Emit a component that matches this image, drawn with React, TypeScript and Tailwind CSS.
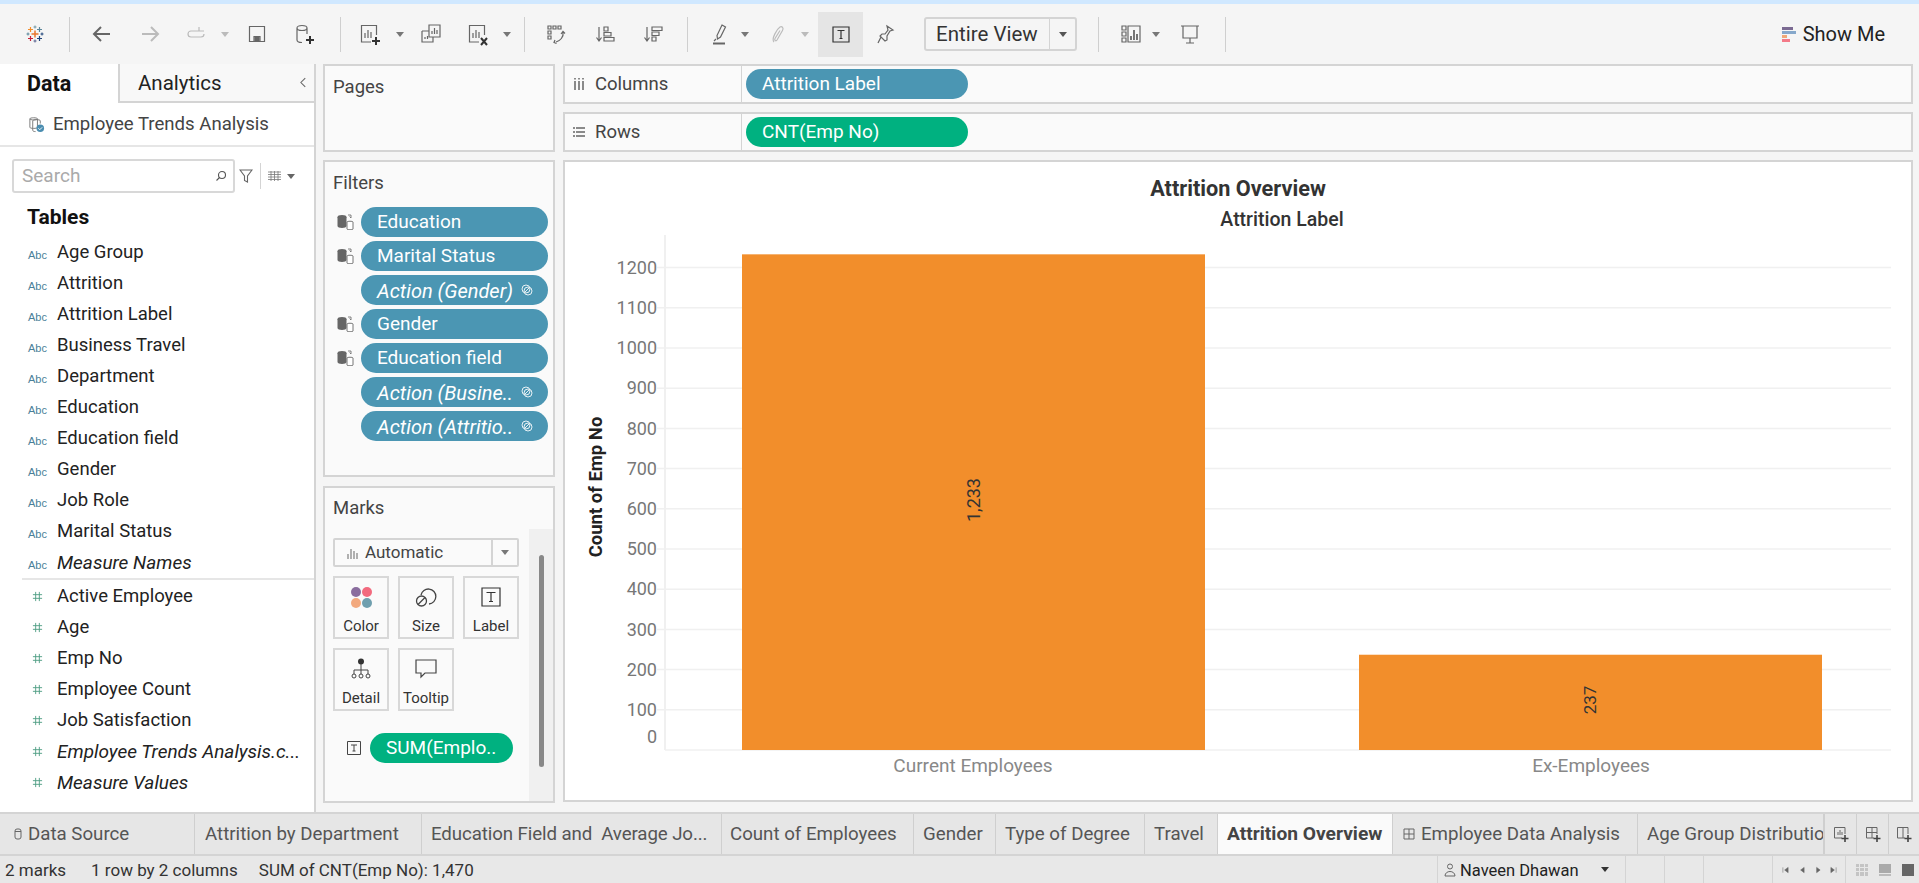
import type { ReactNode } from 'react'

const font = '[font-family:Roboto,"Liberation_Sans",sans-serif]'

function Ico({ children, className = '' }: { children: ReactNode; className?: string }) {
  return (
    <svg viewBox="0 0 24 24" fill="none" stroke="#666" strokeWidth="1.2" className={`w-[24px] h-[24px] shrink-0 ${className}`}>
      {children}
    </svg>
  )
}

function Caret({ className = '', color = '#777' }: { className?: string; color?: string }) {
  return (
    <svg viewBox="0 0 8 5" className={`w-[8px] h-[5px] shrink-0 ${className}`}>
      <path d="M0 0h8L4 5z" fill={color} />
    </svg>
  )
}

function Sep({ className = '' }: { className?: string }) {
  return <div className={`w-[1px] h-[35px] bg-[#cfcfcf] shrink-0 ${className}`} />
}

function Logo() {
  const plus = (x: number, y: number, r: number, c: string, w = 1.2) => (
    <path d={`M${x - r} ${y}H${x + r}M${x} ${y - r}V${y + r}`} stroke={c} strokeWidth={w} />
  )
  return (
    <svg viewBox="0 0 24 24" className="w-[24px] h-[24px] shrink-0">
      {plus(12, 12, 3.5, '#e8762c', 1.5)}
      {plus(7.5, 7.5, 2.5, '#f28e2b')}
      {plus(16.5, 7.5, 2.5, '#5b879b')}
      {plus(7.5, 16.5, 2.5, '#c72037')}
      {plus(16.5, 16.5, 2.5, '#1f447a')}
      {plus(12, 5, 1.5, '#7099a6', 1)}
      {plus(12, 19, 1.5, '#5b6591', 1)}
      {plus(5, 12, 1.5, '#59879b', 1)}
      {plus(19, 12, 1.5, '#1f447a', 1)}
    </svg>
  )
}

function Toolbar() {
  return (
    <div className="flex items-center h-[60px] pl-[23px] pr-[34px] bg-[#f5f5f5]">
      <Logo />
      <Sep className="ml-[22px]" />
      <Ico className="ml-[20px]"><path d="M20 12H5M11 5l-7 7 7 7" stroke="#666" strokeWidth="2" /></Ico>
      <Ico className="ml-[24px]"><path d="M4 12h15M13 5l7 7-7 7" stroke="#bbb" strokeWidth="2" /></Ico>
      <Ico className="ml-[22px]"><path d="M20 9H7a3 3 0 0 0 0 6h10a3 3 0 0 0 3-3M15 5v4h-1" stroke="#bbb" /></Ico>
      <Caret className="ml-[13px]" color="#bbb" />
      <Ico className="ml-[16px]"><path d="M4.500 4.500h15v15h-15zM9 19.500v-5h6v5" /><path d="M10 15.500h4v4h-4z" fill="#666" /></Ico>
      <Ico className="ml-[23px]">
        <path d="M5 6v12c0 1.500 2 2.500 5 2.500M15 6v6M5 6c0-1.500 2-2.500 5-2.500s5 1 5 2.500-2 2.500-5 2.500-5-1-5-2.500z" />
        <path d="M18 14v8M14 18h8" stroke="#333" strokeWidth="2" />
      </Ico>
      <Sep className="ml-[24px]" />
      <Ico className="ml-[17px]">
        <path d="M13 20H3.500V3.500h15V13" />
        <path d="M7 16v-5M10 16V8M13 16v-6" />
        <path d="M18 15v8M14 19h8" stroke="#333" strokeWidth="2" />
      </Ico>
      <Caret className="ml-[14px]" />
      <Ico className="ml-[15px]">
        <path d="M10 3h11v12H10zM3 9h7M3 9v11h11v-5" />
        <path d="M13 12v-3M15.500 12V6M18 12V8M6 17v-2M8.500 17v-3" />
      </Ico>
      <Ico className="ml-[23px]">
        <path d="M13 20H3.500V3.500h15V13" />
        <path d="M7 16v-5M10 16V8M13 16v-6" />
        <path d="M15 16l6 7M21 16l-6 7" stroke="#333" strokeWidth="2" />
      </Ico>
      <Caret className="ml-[13px]" />
      <Sep className="ml-[13px]" />
      <Ico className="ml-[19px]">
        <path d="M4 4h3v3H4zM9 4h3v3H9zM14 4h3v3h-3zM4 9h3v3H4zM4 14h3v3H4z" />
        <path d="M19 10c1 5-3 9-7 10M11 18l-1 2.500 2.500 1M17 12l2-2.500 2 2" />
      </Ico>
      <Ico className="ml-[25px]">
        <path d="M6 5v13M3.500 15.500L6 19l2.500-3.500" />
        <path d="M11 5h4v4h-4zM11 10.500h7v3.500h-7zM11 15.500h10V19H11z" />
      </Ico>
      <Ico className="ml-[24px]">
        <path d="M6 5v13M3.500 15.500L6 19l2.500-3.500" />
        <path d="M11 5h10v3.500H11zM11 10h7v3.500h-7zM11 15h4v4h-4z" />
      </Ico>
      <Sep className="ml-[22px]" />
      <Ico className="ml-[20px]">
        <path d="M14 3l3.500 2-5 10-3 2-.5-3.500zM8 17l-2 2" />
        <path d="M5 21.500h12" stroke="#666" strokeWidth="2" />
      </Ico>
      <Caret className="ml-[9px]" />
      <Ico className="ml-[16px]"><path d="M9 20c-3-3 3-13 6-15 2-1 4 1 2.500 3.500L12 18c-1 1.500-3 .5-2-1.500l5-8" stroke="#bbb" /></Ico>
      <Caret className="ml-[12px]" color="#bbb" />
      <div className="ml-[9px] w-[45px] h-[45px] bg-[#e5e5e5] flex items-center justify-center shrink-0">
        <Ico>
          <path d="M4 5h16v15H4z" stroke="#333" />
          <path d="M8.500 8.500h7M12 8.500v8M10.500 16.500h3" stroke="#333" />
        </Ico>
      </div>
      <Ico className="ml-[10px]">
        <path d="M14 4l6 4-3 1-3 5 0 4-2 1-5-5 2-2h3l3-4z" />
        <path d="M8 15l-3 6" />
      </Ico>
      <div className="ml-[27px] w-[153px] h-[34px] border-2 border-[#d4d4d4] rounded-[3px] flex items-center shrink-0">
        <span className={`flex-1 pl-[10px] text-[20.5px] text-[#333] ${font}`}>Entire View</span>
        <div className="w-[26px] h-full border-l border-[#d4d4d4] flex items-center justify-center">
          <Caret color="#555" />
        </div>
      </div>
      <Sep className="ml-[21px]" />
      <Ico className="ml-[20px]">
        <path d="M3 4h4v4H3zM3 10h4v4H3zM3 16h4v4H3zM9 4h12v16H9z" />
        <path d="M12 18v-4M15 18V8M18 18v-6" strokeWidth="1.800" />
      </Ico>
      <Caret className="ml-[9px]" />
      <Ico className="ml-[18px]">
        <path d="M3 4h18M5 4v12h14V4M12 16v5M8 21h8" />
      </Ico>
      <Sep className="ml-[23px]" />
      <div className="ml-auto flex items-center gap-[7px]">
        <div className="flex flex-col gap-[1px] w-[14px]">
          <div className="h-[3px] w-[11px] bg-[#7b6a92]" />
          <div className="h-[3px] w-[14px] bg-[#86a8cb]" />
          <div className="h-[3px] w-[5px] bg-[#f0a878]" />
          <div className="h-[3px] w-[8px] bg-[#f47a88]" />
        </div>
        <span className={`text-[20px] text-[#222] ${font}`}>Show Me</span>
      </div>
    </div>
  )
}

const dims = ['Age Group', 'Attrition', 'Attrition Label', 'Business Travel', 'Department', 'Education', 'Education field', 'Gender', 'Job Role', 'Marital Status']
const measures = ['Active Employee', 'Age', 'Emp No', 'Employee Count', 'Job Satisfaction']

function FieldRow({ kind, label, italic }: { kind: 'abc' | 'num'; label: string; italic?: boolean }) {
  return (
    <div className="flex items-center h-[31px]">
      <div className="w-[57px] pl-[28px] shrink-0">
        {kind === 'abc' ? (
          <span className="text-[11px] font-medium text-[#4a7f99] [font-family:'Liberation_Sans',sans-serif]">Abc</span>
        ) : (
          <svg viewBox="0 0 12 12" className="w-[11px] h-[11px] ml-[4px]" stroke="#4f9e83" strokeWidth="1" fill="none">
            <path d="M4 1v10M8 1v10M1 4h10M1 8h10" />
          </svg>
        )}
      </div>
      <span className={`pt-[1px] whitespace-nowrap text-[#222] ${font} ${italic ? 'italic text-[19px]' : 'text-[18.5px]'}`}>{label}</span>
    </div>
  )
}

function DataPanel() {
  return (
    <div className="w-[316px] shrink-0 bg-white border-r-2 border-[#d4d4d4] flex flex-col">
      <div className="flex h-[39px] border-b-2 border-[#d4d4d4] relative">
        <div className="w-[120px] -mb-[2px] bg-white border-r-2 border-[#d4d4d4] flex items-center pl-[27px]">
          <span className={`pt-[1px] text-[21.5px] font-bold text-[#111] ${font}`}>Data</span>
        </div>
        <div className="flex-1 bg-[#f8f8f8] flex items-center pl-[18px] pr-[7px] justify-between">
          <span className={`pt-[2px] text-[20.5px] text-[#222] ${font}`}>Analytics</span>
          <svg viewBox="0 0 8 12" className="w-[7px] h-[11px]" fill="none" stroke="#666" strokeWidth="1.200"><path d="M6 1L1 6l5 5" /></svg>
        </div>
      </div>
      <div className="flex items-center h-[44px] pl-[28px] gap-[8px] border-b-2 border-[#e6e6e6]">
        <svg viewBox="0 0 18 18" className="w-[17px] h-[17px]" fill="none" stroke="#777" strokeWidth="1">
          <path d="M2 3c0-1.500 8-1.500 8 0v9c0 1.500-8 1.500-8 0zM2 3c0 1.500 8 1.500 8 0M5 5c0-1.500 8-1.500 8 0v3M5 5v10c0 1 1 1.500 3 1.500" />
          <circle cx="13" cy="13" r="4" fill="#4a8db0" stroke="none" />
          <path d="M11 13l1.500 1.500L15 12" stroke="#fff" />
        </svg>
        <span className={`pt-[2px] text-[18.6px] text-[#444] ${font}`}>Employee Trends Analysis</span>
      </div>
      <div className="flex items-center mt-[12px] pl-[12px] h-[34px]">
        <div className="w-[223px] h-full border-2 border-[#d8d8d8] rounded-[3px] flex items-center pl-[8px] pr-[6px] justify-between">
          <span className={`text-[19px] leading-[26px] text-[#aaa] ${font}`}>Search</span>
          <svg viewBox="0 0 12 12" className="w-[12px] h-[12px]" fill="none" stroke="#555" strokeWidth="1.100">
            <circle cx="7" cy="5" r="3.500" /><path d="M4.500 7.500L1.500 10.500" />
          </svg>
        </div>
        <svg viewBox="0 0 14 16" className="ml-[4px] w-[14px] h-[16px]" fill="none" stroke="#666" strokeWidth="1.100">
          <path d="M1 2h12L8.500 8v6l-3-1.500V8z" />
        </svg>
        <div className="ml-[7px] w-[1px] h-[26px] bg-[#d4d4d4]" />
        <svg viewBox="0 0 13 10" className="ml-[7px] w-[13px] h-[10px]" stroke="#777" strokeWidth=".8" fill="none">
          <path d="M0 1h13M0 3.500h13M0 6h13M0 8.500h13M3 0v10M6.500 0v10M10 0v10" />
        </svg>
        <Caret className="ml-[6px]" color="#666" />
      </div>
      <div className={`pl-[27px] mt-[8px] h-[34px] mb-[2px] flex items-center text-[21px] font-bold text-[#111] ${font}`}>Tables</div>
      <div>
        {dims.map((d) => <FieldRow key={d} kind="abc" label={d} />)}
        <FieldRow kind="abc" label="Measure Names" italic />
      </div>
      <div className="ml-[22px] h-[2px] bg-[#e6e6e6]" />
      <div className="mt-[1px]">
        {measures.map((m) => <FieldRow key={m} kind="num" label={m} />)}
        <FieldRow kind="num" label="Employee Trends Analysis.c..." italic />
        <FieldRow kind="num" label="Measure Values" italic />
      </div>
    </div>
  )
}

function Pill({ label, color, italic, link, className = '' }: { label: string; color: 'blue' | 'green'; italic?: boolean; link?: boolean; className?: string }) {
  return (
    <div className={`h-[30px] rounded-[15px] flex items-center pl-[16px] pr-[15px] justify-between text-white whitespace-nowrap ${font} ${color === 'blue' ? 'bg-[#4b96b3]' : 'bg-[#00b180]'} ${italic ? 'italic text-[20px]' : 'text-[19px]'} ${className}`}>
      <span className="pt-[1px]">{label}</span>
      {link && (
        <svg viewBox="0 0 12 12" className="w-[12px] h-[12px] shrink-0" fill="none" stroke="#e6f0f4" strokeWidth="1">
          <circle cx="5" cy="5" r="4" /><circle cx="7" cy="7" r="4" /><path d="M3 9l6-6" />
        </svg>
      )}
    </div>
  )
}

function DbIcon() {
  return (
    <svg viewBox="0 0 17 16" className="w-[17px] h-[16px] shrink-0" fill="none">
      <ellipse cx="5" cy="3" rx="4.500" ry="2" fill="#666" />
      <path d="M.5 3v9c0 1 2 2 4.500 2s4.500-1 4.500-2V3z" fill="#666" />
      <path d="M11 1h3v3M12.500 2.500l1.500 1.500" stroke="#666" strokeWidth=".8" />
      <path d="M10 8c0-1 6-1 6 0v7c0 1-6 1-6 0z" fill="#fff" stroke="#666" strokeWidth=".9" />
    </svg>
  )
}

const filters: { label: string; db?: boolean; action?: boolean }[] = [
  { label: 'Education', db: true },
  { label: 'Marital Status', db: true },
  { label: 'Action (Gender)', action: true },
  { label: 'Gender', db: true },
  { label: 'Education field', db: true },
  { label: 'Action (Busine..', action: true },
  { label: 'Action (Attritio..', action: true },
]

function MarkBtn({ label, children }: { label: string; children: ReactNode }) {
  return (
    <div className="w-[56px] h-[63px] border-2 border-[#d8d8d8] flex flex-col items-center pt-[8px]">
      <div className="h-[24px] flex items-center justify-center">{children}</div>
      <span className={`mt-[6px] text-[15px] text-[#333] ${font}`}>{label}</span>
    </div>
  )
}

function ShelfColumn() {
  return (
    <div className="ml-[7px] w-[232px] shrink-0 flex flex-col">
      <div className="h-[88px] bg-[#fafafa] border-2 border-[#d4d4d4] pl-[8px] pt-[8px]">
        <span className={`text-[18.5px] text-[#444] ${font}`}>Pages</span>
      </div>
      <div className="mt-[8px] h-[317px] bg-[#fafafa] border-2 border-[#d4d4d4] pl-[8px] pr-[5px]">
        <div className={`h-[45px] pt-[8px] text-[18.5px] text-[#444] ${font}`}>Filters</div>
        <div className="flex flex-col gap-[4px]">
          {filters.map((f) => (
            <div key={f.label} className="flex items-center">
              <div className="w-[28px] pl-[4px] shrink-0">{f.db && <DbIcon />}</div>
              <Pill label={f.label} color="blue" italic={f.action} link={f.action} className="flex-1" />
            </div>
          ))}
        </div>
      </div>
      <div className="mt-[9px] h-[317px] bg-[#fafafa] border-2 border-[#d4d4d4] flex flex-col">
        <div className={`h-[41px] pl-[8px] pt-[7px] text-[18.5px] text-[#444] ${font}`}>Marks</div>
        <div className="flex flex-1 min-h-0">
          <div className="w-[204px] pl-[8px]">
            <div className="mt-[9px] w-[186px] h-[29px] border-2 border-[#d4d4d4] rounded-[2px] flex items-center">
              <div className="flex-1 flex items-center pl-[12px] gap-[6px]">
                <svg viewBox="0 0 12 12" className="w-[12px] h-[12px]" stroke="#666" strokeWidth="1"><path d="M1 12V7M4 12V2M7 12V4M10 12V6" /></svg>
                <span className={`text-[17px] text-[#444] ${font}`}>Automatic</span>
              </div>
              <div className="w-[26px] h-full border-l-2 border-[#d4d4d4] flex items-center justify-center"><Caret color="#777" /></div>
            </div>
            <div className="mt-[9px] grid grid-cols-[56px_56px_56px] gap-[9px]">
              <MarkBtn label="Color">
                <div className="grid grid-cols-2 gap-[1px]">
                  <div className="w-[10px] h-[10px] rounded-full bg-[#8a6d9e]" />
                  <div className="w-[10px] h-[10px] rounded-full bg-[#f26a7e]" />
                  <div className="w-[10px] h-[10px] rounded-full bg-[#f2a97e]" />
                  <div className="w-[10px] h-[10px] rounded-full bg-[#6f9fae]" />
                </div>
              </MarkBtn>
              <MarkBtn label="Size">
                <svg viewBox="0 0 22 22" className="w-[22px] h-[22px]" fill="none" stroke="#444" strokeWidth="1.300">
                  <path d="M6 9a7.500 7.500 0 1 1 8 9" /><circle cx="6.500" cy="15" r="5" /><path d="M3 18.500l7-7" />
                </svg>
              </MarkBtn>
              <MarkBtn label="Label">
                <svg viewBox="0 0 20 20" className="w-[20px] h-[20px]" fill="none" stroke="#333" strokeWidth="1.200">
                  <path d="M1 1h18v18H1zM5.500 5.500h9M10 5.500v9M8 14.500h4" />
                </svg>
              </MarkBtn>
              <MarkBtn label="Detail">
                <svg viewBox="0 0 20 22" className="w-[20px] h-[22px]" fill="none" stroke="#444" strokeWidth="1">
                  <circle cx="10" cy="3.500" r="3" fill="#333" stroke="none" />
                  <path d="M10 6v10M3 16v-4h14v4" />
                  <circle cx="3" cy="18" r="2" /><circle cx="10" cy="18" r="2" /><circle cx="17" cy="18" r="2" />
                </svg>
              </MarkBtn>
              <MarkBtn label="Tooltip">
                <svg viewBox="0 0 22 20" className="w-[22px] h-[20px]" fill="none" stroke="#444" strokeWidth="1.200">
                  <path d="M1 1h20v13H10l-4 4v-4H1z" />
                </svg>
              </MarkBtn>
            </div>
            <div className="mt-[22px] flex items-center pl-[14px]">
              <svg viewBox="0 0 14 14" className="w-[14px] h-[14px] shrink-0" fill="none" stroke="#444" strokeWidth="1">
                <path d="M.5.5h13v13H.5zM4 4h6M7 4v6M5.500 10h3" />
              </svg>
              <Pill label="SUM(Emplo.." color="green" className="ml-[9px] w-[143px]" />
            </div>
          </div>
          <div className="w-[24px] ml-[1px] bg-[#f0f0f0] pt-[26px] pl-[10px]">
            <div className="w-[5px] h-[212px] rounded-[3px] bg-[#888]" />
          </div>
        </div>
      </div>
    </div>
  )
}

function Shelf({ label, icon, children }: { label: string; icon: ReactNode; children: ReactNode }) {
  return (
    <div className="h-[40px] bg-[#fafafa] border-2 border-[#d4d4d4] flex items-center">
      <div className="w-[177px] h-full border-r border-[#d4d4d4] flex items-center pl-[8px] gap-[10px] shrink-0">
        <div className="w-[12px] flex justify-center">{icon}</div>
        <span className={`pt-[2px] text-[18.5px] text-[#444] ${font}`}>{label}</span>
      </div>
      <div className="pl-[4px]">{children}</div>
    </div>
  )
}

const ticks = [1200, 1100, 1000, 900, 800, 700, 600, 500, 400, 300, 200, 100]

// svg origin sits at the chart panel's inner left edge, just under the subtitle (y 235)
function Chart() {
  const y = (v: number) => 515 - v * 0.402
  const axisFont = 'Roboto, sans-serif'
  return (
    <svg viewBox="0 0 1346 565" className="w-[1346px] h-[565px] block">
      <text x="32" y="252" transform="rotate(-90 32 252)" textAnchor="middle" dominantBaseline="middle" fontSize="18.500" fontWeight="700" fill="#222" fontFamily={axisFont}>Count of Emp No</text>
      <path d="M100 -5V515" stroke="#f0f0f0" strokeWidth="2" />
      {ticks.map((t) => (
        <g key={t}>
          <path d={`M92 ${y(t)}H1326`} stroke="#f0f0f0" strokeWidth="1.500" />
          <text x="92" y={y(t) + 1.5} textAnchor="end" dominantBaseline="middle" fontSize="18" fill="#777" fontFamily={axisFont}>{t}</text>
        </g>
      ))}
      <path d="M100 515H1326" stroke="#f0f0f0" strokeWidth="1.500" />
      <text x="92" y="503" textAnchor="end" dominantBaseline="middle" fontSize="18" fill="#777" fontFamily={axisFont}>0</text>
      <rect x="177" y={y(1233)} width="463" height={1233 * 0.402} fill="#f28e2b" />
      <rect x="794" y={y(237)} width="463" height={237 * 0.402} fill="#f28e2b" />
      <text x="410" y="265" transform="rotate(-90 410 265)" textAnchor="middle" dominantBaseline="middle" fontSize="18" fill="#333" fontFamily={axisFont}>1,233</text>
      <text x="1027" y="465" transform="rotate(-90 1027 465)" textAnchor="middle" dominantBaseline="middle" fontSize="17" fill="#333" fontFamily={axisFont}>237</text>
      <text x="408" y="532" textAnchor="middle" dominantBaseline="middle" fontSize="19" fill="#888" fontFamily={axisFont}>Current Employees</text>
      <text x="1026" y="532" textAnchor="middle" dominantBaseline="middle" fontSize="19" fill="#888" fontFamily={axisFont}>Ex-Employees</text>
    </svg>
  )
}

function ViewColumn() {
  return (
    <div className="ml-[8px] w-[1350px] shrink-0 flex flex-col">
      <Shelf
        label="Columns"
        icon={<svg viewBox="0 0 10 12" className="w-[10px] h-[12px]" stroke="#666" strokeWidth="1.500"><path d="M1 3v9M5 3v9M9 3v9M1 0v1.500M5 0v1.500M9 0v1.500" /></svg>}
      >
        <Pill label="Attrition Label" color="blue" className="w-[222px]" />
      </Shelf>
      <div className="mt-[8px]">
        <Shelf
          label="Rows"
          icon={<svg viewBox="0 0 12 10" className="w-[12px] h-[10px]" stroke="#666" strokeWidth="1.500"><path d="M0 1h2M3 1h9M0 5h2M3 5h9M0 9h2M3 9h9" /></svg>}
        >
          <Pill label="CNT(Emp No)" color="green" className="w-[222px]" />
        </Shelf>
      </div>
      <div className="mt-[8px] h-[642px] bg-white border-2 border-[#d4d4d4] flex flex-col">
        <div className={`text-center mt-[14px] h-[26px] leading-[26px] text-[21.7px] font-bold text-[#333] ${font}`}>Attrition Overview</div>
        <div className={`text-center mt-[6px] mb-[3px] pl-[88px] h-[24px] leading-[24px] text-[19.5px] font-medium text-[#333] ${font}`}>Attrition Label</div>
        <Chart />
      </div>
    </div>
  )
}

const tabs = [
  { label: 'Data Source', w: 'w-[195px]', pl: 'pl-[14px]', ds: true },
  { label: 'Attrition by Department', w: 'w-[227px]', pl: 'pl-[10px]' },
  { label: 'Education Field and  Average Jo...', w: 'w-[300px]', pl: 'pl-[9px]', tight: true },
  { label: 'Count of Employees', w: 'w-[192px]', pl: 'pl-[8px]' },
  { label: 'Gender', w: 'w-[82px]', pl: 'pl-[9px]' },
  { label: 'Type of Degree', w: 'w-[149px]', pl: 'pl-[9px]' },
  { label: 'Travel', w: 'w-[73px]', pl: 'pl-[9px]' },
  { label: 'Attrition Overview', w: 'w-[175px]', pl: 'pl-[9px]', active: true },
  { label: 'Employee Data Analysis', w: 'w-[245px]', pl: 'pl-[10px]', dash: true },
  { label: 'Age Group Distribution', w: 'w-[186px]', pl: 'pl-[9px]' },
]

function TabBar() {
  return (
    <div className="h-[44px] bg-[#e6e6e6] border-t-2 border-[#d4d4d4] border-b-2 flex">
      {tabs.map((t) => (
        <div key={t.label} className={`${t.w} ${t.pl} shrink-0 overflow-hidden flex items-center gap-[6px] border-r border-[#cfcfcf] whitespace-pre ${t.active ? 'bg-[#fafafa]' : ''}`}>
          {t.ds && (
            <svg viewBox="0 0 8 12" className="w-[8px] h-[12px] shrink-0" fill="none" stroke="#666" strokeWidth="1"><rect x="1" y="1" width="6" height="10" rx="2" /><path d="M1 3.500h6" /></svg>
          )}
          {t.dash && (
            <svg viewBox="0 0 12 12" className="w-[12px] h-[12px] shrink-0" fill="none" stroke="#666" strokeWidth="1"><path d="M1 1h10v10H1zM6 1v10M1 6h10" /></svg>
          )}
          <span className={`pt-[1px] ${font} ${t.tight ? 'tracking-[-0.1px]' : ''} ${t.active ? 'text-[19.2px] font-bold text-[#444]' : 'text-[18.7px] text-[#555]'}`}>{t.label}</span>
        </div>
      ))}
      {[0, 1, 2].map((i) => (
        <div key={i} className={`${i === 2 ? 'w-[31px]' : 'w-[32px]'} shrink-0 flex items-center justify-center border-l border-[#cfcfcf]`}>
          <svg viewBox="0 0 16 16" className="w-[16px] h-[16px]" fill="none" stroke="#666" strokeWidth="1">
            <path d="M9 12H1.500V1.500H12V8" />
            {i === 0 && <path d="M5 9V6M7 9V4M9 9V6" />}
            {i === 1 && <path d="M7 1.500V12M1.500 6.500H12" />}
            {i === 2 && <path d="M7 1.500V12" />}
            <path d="M12 9v7M8.500 12.500h7" stroke="#444" strokeWidth="1.600" />
          </svg>
        </div>
      ))}
    </div>
  )
}

function StatusBar() {
  return (
    <div className={`h-[27px] bg-[#e8e8e8] flex items-center text-[17px] text-[#333] ${font}`}>
      <span className="ml-[5px] pt-[3px]">2 marks</span>
      <span className="ml-[25px] pt-[3px]">1 row by 2 columns</span>
      <span className="ml-[21px] pt-[3px]">SUM of CNT(Emp No): 1,470</span>
      <div className="ml-auto flex h-full">
        <div className="w-[189px] border-l border-r border-[#d4d4d4] flex items-center pl-[5px]">
          <svg viewBox="0 0 12 14" className="w-[12px] h-[14px] ml-[1px] shrink-0" fill="none" stroke="#666" strokeWidth="1"><circle cx="6" cy="3.500" r="2.500" /><path d="M1 13c0-6 10-6 10 0z" /></svg>
          <span className="ml-[4px] pt-[3px] text-[#222] text-[16.5px]">Naveen Dhawan</span>
          <Caret className="ml-[22px]" color="#333" />
        </div>
        <div className="w-[39px] border-r border-[#d4d4d4]" />
        <div className="w-[39px] border-r border-[#d4d4d4]" />
        <div className="w-[69px] border-r border-[#d4d4d4]" />
        <div className="w-[73px] border-r border-[#d4d4d4] flex items-center pl-[9px] gap-[9px]">
          {['M1 1v6M7 1L3 4l4 3z', 'M7 1L3 4l4 3z', 'M3 1l4 3-4 3z', 'M7 1v6M1 1l4 3-4 3z'].map((d) => (
            <svg key={d} viewBox="0 0 8 8" className="w-[7px] h-[8px]"><path d={d} fill="#666" stroke="#666" strokeWidth=".6" /></svg>
          ))}
        </div>
        <div className="w-[73px] flex items-center pl-[10px] gap-[11px]">
          <div className="w-[12px] h-[12px] grid grid-cols-3 gap-[1px]">
            {Array.from({ length: 9 }).map((_, i) => <div key={i} className="bg-[#c4c4c4]" />)}
          </div>
          <div className="w-[12px] h-[12px] flex flex-col gap-[1px]">
            <div className="flex-1 bg-[#aaa]" />
            <div className="h-[2px] bg-[#bbb]" />
          </div>
          <div className="w-[12px] h-[12px] bg-[#666]" />
        </div>
      </div>
    </div>
  )
}

export default function App() {
  return (
    <div className="w-[1919px] h-[883px] overflow-hidden bg-[#f5f5f5] flex flex-col">
      <div className="h-[4px] bg-[#d0e8ff]" />
      <Toolbar />
      <div className="flex h-[748px]">
        <DataPanel />
        <ShelfColumn />
        <ViewColumn />
      </div>
      <TabBar />
      <StatusBar />
    </div>
  )
}
